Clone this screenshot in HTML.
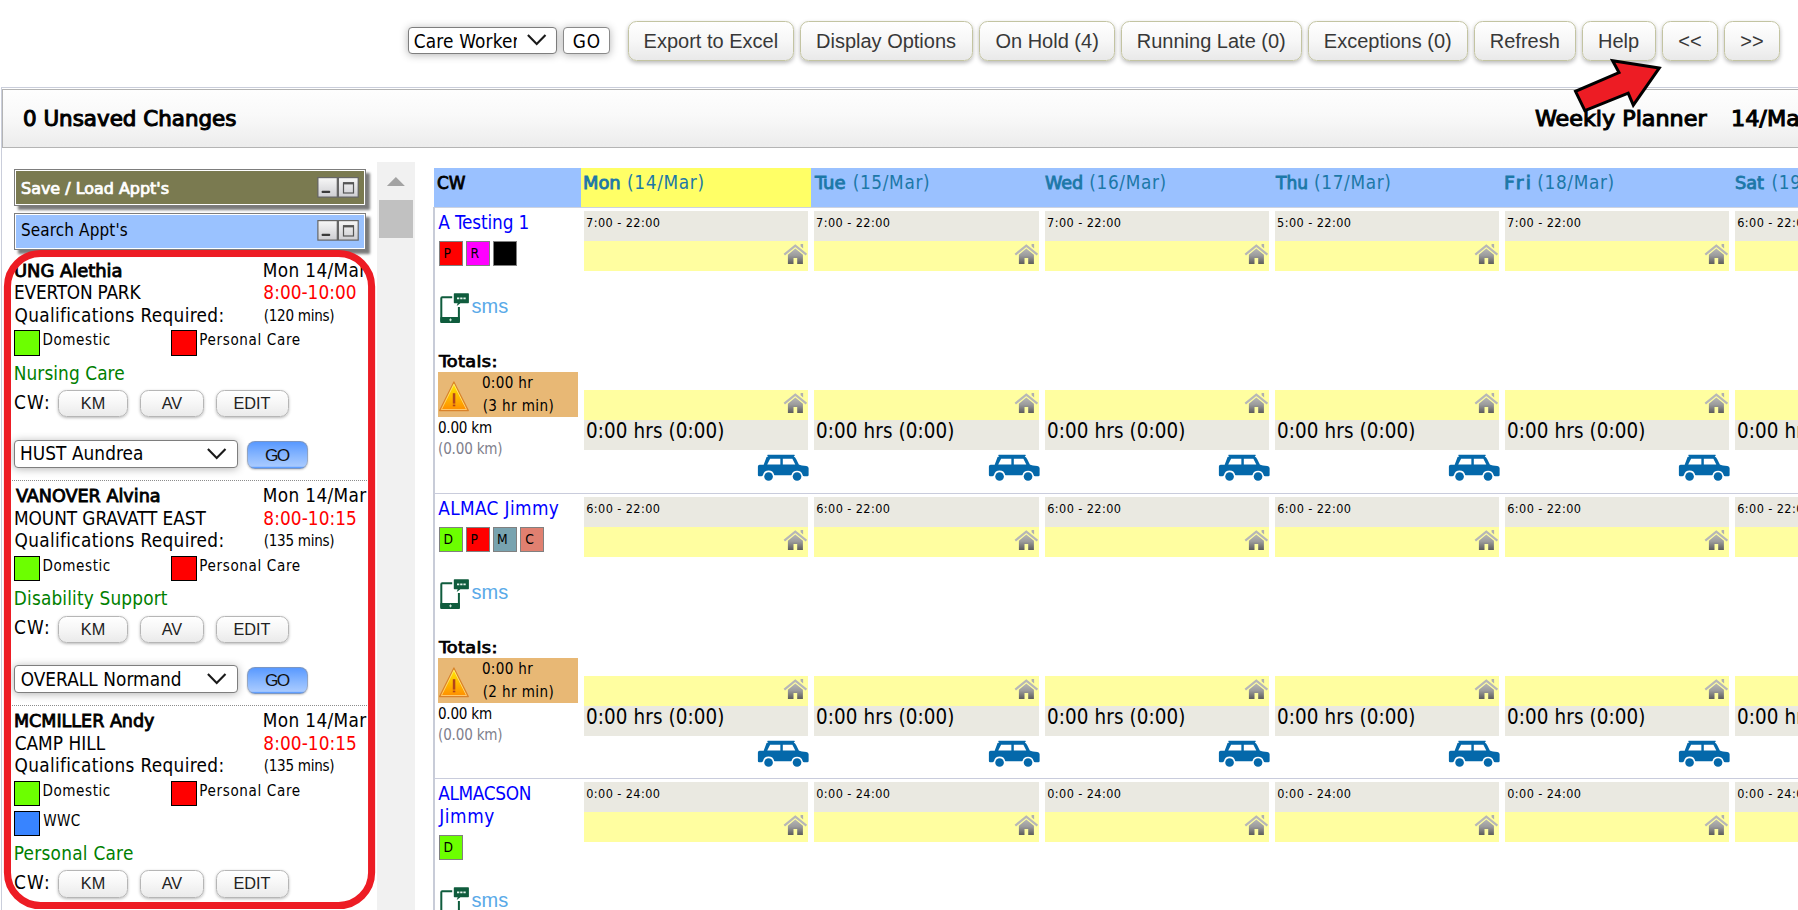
<!DOCTYPE html><html><head><meta charset="utf-8"><title>Weekly Planner</title><style>
html,body{margin:0;padding:0;background:#fff;}
body{width:1798px;height:910px;overflow:hidden;position:relative;font-family:"DejaVu Sans Condensed","Liberation Sans",sans-serif;color:#000;}
#root{position:absolute;left:0;top:0;width:1798px;height:910px;overflow:hidden;}
#root div,#root .abs{position:absolute;box-sizing:border-box;}
.t{position:absolute;white-space:nowrap;line-height:1;transform-origin:0 0;}
.a,.tb,.sb,.bgo{font-family:"Liberation Sans",Arial,sans-serif;}
.clip{overflow:hidden;}
.grp{left:0;top:0;width:0;height:0;}
.outer{border:1px solid #cacedb;border-right:0;border-bottom:0;}
.hdr{border:1px solid #b4b4b4;border-right:0;background:linear-gradient(#fefefe,#f9f9f9 45%,#ececec);}
.sel{background:#fff;border:1px solid #7e7e7e;border-radius:4px;box-shadow:0 1px 9px rgba(0,0,0,.3);}
.gobtn{background:#fff;border:1px solid #8a8a8a;border-radius:4px;box-shadow:0 1px 9px rgba(0,0,0,.3);}
.tb{border:1px solid #c3c4a2;border-radius:8.5px;background:linear-gradient(#ffffff,#f7f7f7 50%,#e9e9e9);box-shadow:0 2px 4px rgba(0,0,0,.28);display:flex;align-items:center;justify-content:center;font-size:19.95px;color:#383838;}
.tb span{position:relative;top:0.6px;white-space:nowrap;}
.sb{border:1px solid #b6b6b6;border-radius:8.5px;background:linear-gradient(#ffffff,#f6f6f6 50%,#eaeaea);box-shadow:0 1px 3px rgba(0,0,0,.28);display:flex;align-items:center;justify-content:center;font-size:16.2px;color:#222;}
.sb span{position:relative;top:0.6px;}
.bgo{border-radius:8px;border:1px solid rgba(160,150,135,.5);background:linear-gradient(#5496ff 0,#64a0ff 15%,#8ab8ff 55%,#a8caff 90%,#5a9bff 95%,#5a9bff);background-origin:border-box;box-shadow:0 1px 2px rgba(0,0,0,.2);display:flex;align-items:center;justify-content:center;font-size:16.6px;color:#111;}
.bgo span{position:relative;top:0.4px;}
.wbox{border:1px solid #7d7d7d;box-shadow:inset 0 0 0 1px #fff, 4px 4px 2.5px rgba(0,0,0,.52);}
</style></head><body><div id="root">
<svg class="abs" style="left:0;top:0" width="0" height="0" aria-hidden="true"><defs><linearGradient id="wg" x1="0" y1="0" x2="0" y2="1"><stop offset="0" stop-color="#f6f6f6"/><stop offset="1" stop-color="#cfcfd3"/></linearGradient><linearGradient id="hg" x1="0" y1="0" x2="0" y2="1"><stop offset="0" stop-color="#b6b6b6"/><stop offset="0.45" stop-color="#9c9c9c"/><stop offset="1" stop-color="#5c5c5c"/></linearGradient><linearGradient id="wr" x1="0" y1="0" x2="0" y2="1"><stop offset="0" stop-color="#ffee00"/><stop offset="1" stop-color="#ff8c00"/></linearGradient></defs></svg>
<div class="grp" id="toolbar">
<div class="sel" style="left:408.30px;top:27.30px;width:148.70px;height:26.40px;"></div>
<div class="clip" style="left:409px;top:28px;width:108.3px;height:25px">
<span class="t" style="left:4.76px;top:5.00px;font-size:18.84px;letter-spacing:0.175px;">Care Worker</span>
</div>
<svg class="abs" style="left:525.70px;top:33.30px" width="22" height="14" viewBox="0 0 22 14"><path d="M1.9 1.9 L10.7 11.0 L19.5 1.9" fill="none" stroke="#1a1a1a" stroke-width="2.1"/></svg>
<div class="gobtn" style="left:563.20px;top:27.30px;width:46.40px;height:27.20px;"></div>
<span class="t" style="left:572.76px;top:33.00px;font-size:18.84px;letter-spacing:0.914px;">GO</span>
<div class="tb" style="left:628.00px;top:21.00px;width:166.00px;height:40.00px;"></div>
<span class="t a" style="left:643.60px;top:31.00px;font-size:20.0px;color:#383838;">Export to Excel</span>
<div class="tb" style="left:800.00px;top:21.00px;width:173.00px;height:40.00px;"></div>
<span class="t a" style="left:816.00px;top:31.00px;font-size:20.0px;color:#383838;">Display Options</span>
<div class="tb" style="left:979.00px;top:21.00px;width:136.00px;height:40.00px;"></div>
<span class="t a" style="left:995.45px;top:31.00px;font-size:20.0px;color:#383838;">On Hold (4)</span>
<div class="tb" style="left:1121.00px;top:21.00px;width:181.00px;height:40.00px;"></div>
<span class="t a" style="left:1136.80px;top:31.00px;font-size:20.0px;color:#383838;">Running Late (0)</span>
<div class="tb" style="left:1308.00px;top:21.00px;width:160.00px;height:40.00px;"></div>
<span class="t a" style="left:1323.85px;top:31.00px;font-size:20.0px;color:#383838;">Exceptions (0)</span>
<div class="tb" style="left:1474.00px;top:21.00px;width:102.00px;height:40.00px;"></div>
<span class="t a" style="left:1489.80px;top:31.00px;font-size:20.0px;color:#383838;">Refresh</span>
<div class="tb" style="left:1582.00px;top:21.00px;width:74.00px;height:40.00px;"></div>
<span class="t a" style="left:1598.05px;top:31.00px;font-size:20.0px;color:#383838;">Help</span>
<div class="tb" style="left:1662.00px;top:21.00px;width:56.00px;height:40.00px;"></div>
<span class="t a" style="left:1678.30px;top:31.00px;font-size:20.0px;color:#383838;">&lt;&lt;</span>
<div class="tb" style="left:1724.00px;top:21.00px;width:56.00px;height:40.00px;"></div>
<span class="t a" style="left:1740.30px;top:31.00px;font-size:20.0px;color:#383838;">&gt;&gt;</span>
</div>
<div class="grp" id="titlebar">
<div class="outer" style="left:1.00px;top:87.00px;width:1800.00px;height:830.00px;"></div>
<div class="hdr" style="left:2.00px;top:89.00px;width:1800.00px;height:59.00px;"></div>
<span class="t" style="left:23.11px;top:108.00px;font-size:21.36px;-webkit-text-stroke:0.96px currentColor;transform:scaleX(1.1146);">0 Unsaved Changes</span>
<span class="t" style="left:1535.11px;top:108.00px;font-size:21.36px;-webkit-text-stroke:0.96px currentColor;transform:scaleX(1.1580);">Weekly Planner</span>
<span class="t" style="left:1731.10px;top:108.00px;font-size:21.36px;-webkit-text-stroke:0.96px currentColor;transform:scaleX(1.1604);">14/Mar/2016 - 20/Mar/2016</span>
</div>
<div class="grp" id="sidebar">
<div class="wbox" style="left:14.20px;top:169.00px;width:351.80px;height:37.40px;background:#7a7a50;"></div>
<span class="t" style="left:21.23px;top:181.00px;font-size:16.04px;-webkit-text-stroke:0.72px currentColor;transform:scaleX(1.1056);color:#fff;">Save / Load Appt&#x27;s</span>
<svg class="abs" style="left:317px;top:177.00px" width="42" height="21" viewBox="0 0 42 21"><rect x="0.3" y="0" width="41.5" height="20.7" fill="#666"/><rect x="1.5" y="1.2" width="18.2" height="18.3" fill="url(#wg)"/><rect x="22" y="1.2" width="18.6" height="18.3" fill="url(#wg)"/><rect x="4.6" y="13.7" width="8.6" height="2.4" rx="0.8" fill="#3a3a3a"/><rect x="26.5" y="6" width="10" height="10" fill="none" stroke="#555" stroke-width="1.2"/><rect x="26" y="5.2" width="11" height="2.2" fill="#555"/></svg>
<div class="wbox" style="left:14.20px;top:213.30px;width:351.80px;height:36.50px;background:#9ac2ff;"></div>
<span class="t" style="left:20.88px;top:222.00px;font-size:16.97px;letter-spacing:0.147px;">Search Appt&#x27;s</span>
<svg class="abs" style="left:317px;top:220.10px" width="42" height="21" viewBox="0 0 42 21"><rect x="0.3" y="0" width="41.5" height="20.7" fill="#666"/><rect x="1.5" y="1.2" width="18.2" height="18.3" fill="url(#wg)"/><rect x="22" y="1.2" width="18.6" height="18.3" fill="url(#wg)"/><rect x="4.6" y="13.7" width="8.6" height="2.4" rx="0.8" fill="#3a3a3a"/><rect x="26.5" y="6" width="10" height="10" fill="none" stroke="#555" stroke-width="1.2"/><rect x="26" y="5.2" width="11" height="2.2" fill="#555"/></svg>
<div style="left:377.00px;top:162.00px;width:38.00px;height:760.00px;background:#f1f1f1;"></div>
<div style="left:379.20px;top:200.00px;width:33.80px;height:37.80px;background:#c1c1c1;"></div>
<svg class="abs" style="left:386px;top:176px" width="20" height="11" viewBox="0 0 20 11"><path d="M0.9 10 L9.9 0.9 L18.9 10 Z" fill="#a3a3a3"/></svg>
<span class="t" style="left:14.35px;top:262.00px;font-size:17.8px;-webkit-text-stroke:0.8px currentColor;transform:scaleX(1.1184);">UNG Alethia</span>
<span class="t" style="left:262.80px;top:262.00px;font-size:18.84px;letter-spacing:0.343px;">Mon 14/Mar</span>
<span class="t" style="left:14.00px;top:284.00px;font-size:18.84px;letter-spacing:-0.187px;">EVERTON PARK</span>
<span class="t" style="left:263.37px;top:284.00px;font-size:18.84px;letter-spacing:0.021px;color:#ff0000;">8:00-10:00</span>
<span class="t" style="left:14.46px;top:307.00px;font-size:18.84px;letter-spacing:0.342px;">Qualifications Required:</span>
<span class="t" style="left:263.77px;top:309.00px;font-size:15.07px;letter-spacing:-0.292px;">(120 mins)</span>
<div style="left:14.00px;top:330.00px;width:26.00px;height:26.00px;background:#6cff00;border:1.2px solid #000;"></div>
<span class="t" style="left:42.52px;top:333.00px;font-size:15.07px;letter-spacing:0.559px;">Domestic</span>
<div style="left:170.90px;top:330.00px;width:26.00px;height:26.00px;background:#ff0000;border:1.2px solid #000;"></div>
<span class="t" style="left:199.22px;top:333.00px;font-size:15.07px;letter-spacing:0.640px;">Personal Care</span>
<span class="t" style="left:13.80px;top:365.00px;font-size:18.84px;letter-spacing:0.084px;color:#008000;">Nursing Care</span>
<span class="t" style="left:14.06px;top:394.00px;font-size:18.84px;letter-spacing:1.184px;">CW:</span>
<div class="sb" style="left:58.00px;top:390.00px;width:70.00px;height:27.00px;"></div>
<span class="t a" style="left:80.77px;top:395.00px;font-size:16.3px;color:#222;">KM</span>
<div class="sb" style="left:140.00px;top:390.00px;width:64.00px;height:27.00px;"></div>
<span class="t a" style="left:161.73px;top:395.00px;font-size:16.3px;color:#222;">AV</span>
<div class="sb" style="left:216.00px;top:390.00px;width:73.00px;height:27.00px;"></div>
<span class="t a" style="left:233.47px;top:395.00px;font-size:16.3px;color:#222;">EDIT</span>
<div class="sel" style="left:14.30px;top:440.20px;width:223.40px;height:27.50px;"></div>
<span class="t" style="left:20.00px;top:445.00px;font-size:18.84px;letter-spacing:0.061px;">HUST Aundrea</span>
<svg class="abs" style="left:206.40px;top:446.60px" width="22" height="14" viewBox="0 0 22 14"><path d="M1.9 1.9 L10.7 11.0 L19.5 1.9" fill="none" stroke="#1a1a1a" stroke-width="2.1"/></svg>
<div class="bgo" style="left:247.40px;top:441.30px;width:61.00px;height:27.50px;"></div>
<span class="t a" style="left:265.03px;top:447.00px;font-size:17.3px;letter-spacing:-1.758px;color:#111;">GO</span>
<div style="left:12.00px;top:480.10px;width:355.00px;height:0.00px;border-top:1px dotted #8c8c8c;"></div>
<span class="t" style="left:15.74px;top:487.00px;font-size:17.8px;-webkit-text-stroke:0.8px currentColor;transform:scaleX(1.0999);">VANOVER Alvina</span>
<span class="t" style="left:262.80px;top:487.00px;font-size:18.84px;letter-spacing:0.343px;">Mon 14/Mar</span>
<span class="t" style="left:14.00px;top:510.00px;font-size:18.84px;letter-spacing:-0.065px;">MOUNT GRAVATT EAST</span>
<span class="t" style="left:263.37px;top:510.00px;font-size:18.84px;letter-spacing:0.063px;color:#ff0000;">8:00-10:15</span>
<span class="t" style="left:14.46px;top:532.00px;font-size:18.84px;letter-spacing:0.342px;">Qualifications Required:</span>
<span class="t" style="left:263.77px;top:534.00px;font-size:15.07px;letter-spacing:-0.292px;">(135 mins)</span>
<div style="left:14.00px;top:556.00px;width:26.00px;height:25.00px;background:#6cff00;border:1.2px solid #000;"></div>
<span class="t" style="left:42.52px;top:559.00px;font-size:15.07px;letter-spacing:0.559px;">Domestic</span>
<div style="left:170.90px;top:556.00px;width:26.00px;height:25.00px;background:#ff0000;border:1.2px solid #000;"></div>
<span class="t" style="left:199.22px;top:559.00px;font-size:15.07px;letter-spacing:0.640px;">Personal Care</span>
<span class="t" style="left:13.80px;top:590.00px;font-size:18.84px;letter-spacing:0.169px;color:#008000;">Disability Support</span>
<span class="t" style="left:14.06px;top:619.00px;font-size:18.84px;letter-spacing:1.184px;">CW:</span>
<div class="sb" style="left:58.00px;top:616.00px;width:70.00px;height:27.00px;"></div>
<span class="t a" style="left:80.77px;top:621.00px;font-size:16.3px;color:#222;">KM</span>
<div class="sb" style="left:140.00px;top:616.00px;width:64.00px;height:27.00px;"></div>
<span class="t a" style="left:161.73px;top:621.00px;font-size:16.3px;color:#222;">AV</span>
<div class="sb" style="left:216.00px;top:616.00px;width:73.00px;height:27.00px;"></div>
<span class="t a" style="left:233.47px;top:621.00px;font-size:16.3px;color:#222;">EDIT</span>
<div class="sel" style="left:14.30px;top:665.40px;width:223.40px;height:27.50px;"></div>
<span class="t" style="left:20.66px;top:671.00px;font-size:18.84px;letter-spacing:0.058px;">OVERALL Normand</span>
<svg class="abs" style="left:206.40px;top:671.80px" width="22" height="14" viewBox="0 0 22 14"><path d="M1.9 1.9 L10.7 11.0 L19.5 1.9" fill="none" stroke="#1a1a1a" stroke-width="2.1"/></svg>
<div class="bgo" style="left:247.40px;top:666.50px;width:61.00px;height:27.50px;"></div>
<span class="t a" style="left:265.03px;top:672.00px;font-size:17.3px;letter-spacing:-1.758px;color:#111;">GO</span>
<div style="left:12.00px;top:705.00px;width:355.00px;height:0.00px;border-top:1px dotted #8c8c8c;"></div>
<span class="t" style="left:14.18px;top:712.00px;font-size:17.8px;-webkit-text-stroke:0.8px currentColor;transform:scaleX(1.0945);">MCMILLER Andy</span>
<span class="t" style="left:262.80px;top:712.00px;font-size:18.84px;letter-spacing:0.343px;">Mon 14/Mar</span>
<span class="t" style="left:14.66px;top:735.00px;font-size:18.84px;letter-spacing:0.025px;">CAMP HILL</span>
<span class="t" style="left:263.37px;top:735.00px;font-size:18.84px;letter-spacing:0.063px;color:#ff0000;">8:00-10:15</span>
<span class="t" style="left:14.46px;top:757.00px;font-size:18.84px;letter-spacing:0.342px;">Qualifications Required:</span>
<span class="t" style="left:263.77px;top:759.00px;font-size:15.07px;letter-spacing:-0.292px;">(135 mins)</span>
<div style="left:14.00px;top:781.00px;width:26.00px;height:25.00px;background:#6cff00;border:1.2px solid #000;"></div>
<span class="t" style="left:42.52px;top:784.00px;font-size:15.07px;letter-spacing:0.559px;">Domestic</span>
<div style="left:170.90px;top:781.00px;width:26.00px;height:25.00px;background:#ff0000;border:1.2px solid #000;"></div>
<span class="t" style="left:199.22px;top:784.00px;font-size:15.07px;letter-spacing:0.640px;">Personal Care</span>
<div style="left:14.00px;top:811.00px;width:26.00px;height:25.00px;background:#3884ff;border:1.2px solid #000;"></div>
<span class="t" style="left:43.35px;top:814.00px;font-size:15.07px;letter-spacing:0.343px;">WWC</span>
<span class="t" style="left:13.80px;top:845.00px;font-size:18.84px;letter-spacing:0.252px;color:#008000;">Personal Care</span>
<span class="t" style="left:14.06px;top:874.00px;font-size:18.84px;letter-spacing:1.184px;">CW:</span>
<div class="sb" style="left:58.00px;top:870.00px;width:70.00px;height:28.00px;"></div>
<span class="t a" style="left:80.77px;top:875.00px;font-size:16.3px;color:#222;">KM</span>
<div class="sb" style="left:140.00px;top:870.00px;width:64.00px;height:28.00px;"></div>
<span class="t a" style="left:161.73px;top:875.00px;font-size:16.3px;color:#222;">AV</span>
<div class="sb" style="left:216.00px;top:870.00px;width:73.00px;height:28.00px;"></div>
<span class="t a" style="left:233.47px;top:875.00px;font-size:16.3px;color:#222;">EDIT</span>
</div>
<div class="grp" id="planner">
<div style="left:434.10px;top:168.00px;width:1400.00px;height:39.20px;background:#9ac1ff;"></div>
<div style="left:580.90px;top:168.00px;width:230.20px;height:39.20px;background:#ffff66;"></div>
<span class="t" style="left:436.98px;top:174.00px;font-size:17.8px;-webkit-text-stroke:0.8px currentColor;transform:scaleX(1.0555);">CW</span>
<span class="t" style="left:583.26px;top:174.00px;font-size:17.8px;-webkit-text-stroke:0.8px currentColor;transform:scaleX(1.1173);color:#1c78a8;">Mon</span>
<span class="t" style="left:627.09px;top:174.00px;font-size:18.84px;letter-spacing:0.655px;color:#1c78a8;">(14/Mar)</span>
<span class="t" style="left:815.30px;top:174.00px;font-size:17.8px;-webkit-text-stroke:0.8px currentColor;transform:scaleX(1.1273);color:#1c78a8;">Tue</span>
<span class="t" style="left:852.64px;top:174.00px;font-size:18.84px;letter-spacing:0.655px;color:#1c78a8;">(15/Mar)</span>
<span class="t" style="left:1044.85px;top:174.00px;font-size:17.8px;-webkit-text-stroke:0.8px currentColor;transform:scaleX(1.0998);color:#1c78a8;">Wed</span>
<span class="t" style="left:1089.19px;top:174.00px;font-size:18.84px;letter-spacing:0.655px;color:#1c78a8;">(16/Mar)</span>
<span class="t" style="left:1275.77px;top:174.00px;font-size:17.8px;-webkit-text-stroke:0.8px currentColor;transform:scaleX(1.0661);color:#1c78a8;">Thu</span>
<span class="t" style="left:1313.94px;top:174.00px;font-size:18.84px;letter-spacing:0.655px;color:#1c78a8;">(17/Mar)</span>
<span class="t" style="left:1504.19px;top:174.00px;font-size:17.8px;letter-spacing:2.016px;-webkit-text-stroke:0.8px currentColor;transform:scaleX(1.1800);color:#1c78a8;">Fri</span>
<span class="t" style="left:1537.19px;top:174.00px;font-size:18.84px;letter-spacing:0.655px;color:#1c78a8;">(18/Mar)</span>
<span class="t" style="left:1735.01px;top:174.00px;font-size:17.8px;-webkit-text-stroke:0.8px currentColor;transform:scaleX(1.1081);color:#1c78a8;">Sat</span>
<span class="t" style="left:1771.44px;top:174.00px;font-size:18.84px;letter-spacing:0.655px;color:#1c78a8;">(19/Mar)</span>
<div style="left:434.00px;top:207.00px;width:1400.00px;height:1.00px;background:#cdd3e0;"></div>
<div style="left:433.10px;top:207.00px;width:1.70px;height:720.00px;background:#c8ccd8;"></div>
<div style="left:434.00px;top:493.00px;width:1400.00px;height:1.30px;background:#c9ccdc;"></div>
<div style="left:434.00px;top:777.80px;width:1400.00px;height:1.30px;background:#c9ccdc;"></div>
<span class="t" style="left:438.21px;top:214.00px;font-size:18.84px;letter-spacing:-0.121px;color:#0000ff;">A Testing 1</span>
<div style="left:439.00px;top:241.10px;width:24.00px;height:24.80px;background:#ff0000;border:1px solid #808080;"></div>
<span class="t" style="left:443.43px;top:247.00px;font-size:13.73px;">P</span>
<div style="left:466.15px;top:241.10px;width:24.00px;height:24.80px;background:#ff00ff;border:1px solid #808080;"></div>
<span class="t" style="left:470.58px;top:247.00px;font-size:13.73px;">R</span>
<div style="left:493.30px;top:241.10px;width:24.00px;height:24.80px;background:#000000;border:1px solid #808080;"></div>
<svg class="abs" style="left:439.00px;top:292.90px" width="32" height="32" viewBox="0 0 32 32"><path d="M13.2 4.2 H3.2 Q2.3 4.2 2.3 5.2 V28 Q2.3 29 3.3 29 H18.9 Q19.9 29 19.9 28 V14.0" fill="none" stroke="#0f5c3d" stroke-width="2"/><rect x="1.3" y="24.1" width="19.6" height="5.9" rx="0.9" fill="#0f5c3d"/><path d="M10.1 26.9 h2.8 M11.5 25.5 v2.8" stroke="#d8efe4" stroke-width="0.9"/><path d="M15.5 0.3 H29.2 Q29.9 0.3 29.9 1 V9.5 Q29.9 10.2 29.2 10.2 H21.4 L17.7 13.0 L18.7 10.2 H15.5 Q14.8 10.2 14.8 9.5 V1 Q14.8 0.3 15.5 0.3 Z" fill="#0f5c3d"/><path d="M18.0 5.4 h2.3 M21.2 5.4 h2.3 M24.4 5.4 h2.3" stroke="#e6f5ee" stroke-width="1.6"/></svg>
<span class="t a" style="left:471.40px;top:296.00px;font-size:20.0px;letter-spacing:0.050px;color:#5aaae8;">sms</span>
<div style="left:584.00px;top:211.00px;width:224.00px;height:30.00px;background:#eae9e1;"></div>
<div style="left:584.00px;top:241.00px;width:224.00px;height:30.00px;background:#fffea0;"></div>
<span class="t" style="left:586.12px;top:217.00px;font-size:12.56px;letter-spacing:0.430px;">7:00 - 22:00</span>
<svg class="abs" style="left:783.40px;top:242.80px" width="25" height="22" viewBox="0 0 25 22"><path d="M17.6 0.9 h2.5 v4.6 l-2.5 -2.2 z" fill="#b0b0b0"/><path d="M12.3 5.6 L19.9 11.8 V21 H14.2 V15.0 H10.5 V21 H4.9 V11.8 Z" fill="url(#hg)"/><path d="M1.3 11.6 L12.3 2.6 L23.4 11.6" fill="none" stroke="#b7b7b7" stroke-width="2.2" stroke-linejoin="miter"/></svg>
<div style="left:814.00px;top:211.00px;width:225.00px;height:30.00px;background:#eae9e1;"></div>
<div style="left:814.00px;top:241.00px;width:225.00px;height:30.00px;background:#fffea0;"></div>
<span class="t" style="left:816.12px;top:217.00px;font-size:12.56px;letter-spacing:0.430px;">7:00 - 22:00</span>
<svg class="abs" style="left:1014.40px;top:242.80px" width="25" height="22" viewBox="0 0 25 22"><path d="M17.6 0.9 h2.5 v4.6 l-2.5 -2.2 z" fill="#b0b0b0"/><path d="M12.3 5.6 L19.9 11.8 V21 H14.2 V15.0 H10.5 V21 H4.9 V11.8 Z" fill="url(#hg)"/><path d="M1.3 11.6 L12.3 2.6 L23.4 11.6" fill="none" stroke="#b7b7b7" stroke-width="2.2" stroke-linejoin="miter"/></svg>
<div style="left:1045.00px;top:211.00px;width:224.00px;height:30.00px;background:#eae9e1;"></div>
<div style="left:1045.00px;top:241.00px;width:224.00px;height:30.00px;background:#fffea0;"></div>
<span class="t" style="left:1047.12px;top:217.00px;font-size:12.56px;letter-spacing:0.430px;">7:00 - 22:00</span>
<svg class="abs" style="left:1244.40px;top:242.80px" width="25" height="22" viewBox="0 0 25 22"><path d="M17.6 0.9 h2.5 v4.6 l-2.5 -2.2 z" fill="#b0b0b0"/><path d="M12.3 5.6 L19.9 11.8 V21 H14.2 V15.0 H10.5 V21 H4.9 V11.8 Z" fill="url(#hg)"/><path d="M1.3 11.6 L12.3 2.6 L23.4 11.6" fill="none" stroke="#b7b7b7" stroke-width="2.2" stroke-linejoin="miter"/></svg>
<div style="left:1275.00px;top:211.00px;width:224.00px;height:30.00px;background:#eae9e1;"></div>
<div style="left:1275.00px;top:241.00px;width:224.00px;height:30.00px;background:#fffea0;"></div>
<span class="t" style="left:1277.12px;top:217.00px;font-size:12.56px;letter-spacing:0.430px;">5:00 - 22:00</span>
<svg class="abs" style="left:1474.40px;top:242.80px" width="25" height="22" viewBox="0 0 25 22"><path d="M17.6 0.9 h2.5 v4.6 l-2.5 -2.2 z" fill="#b0b0b0"/><path d="M12.3 5.6 L19.9 11.8 V21 H14.2 V15.0 H10.5 V21 H4.9 V11.8 Z" fill="url(#hg)"/><path d="M1.3 11.6 L12.3 2.6 L23.4 11.6" fill="none" stroke="#b7b7b7" stroke-width="2.2" stroke-linejoin="miter"/></svg>
<div style="left:1505.00px;top:211.00px;width:224.00px;height:30.00px;background:#eae9e1;"></div>
<div style="left:1505.00px;top:241.00px;width:224.00px;height:30.00px;background:#fffea0;"></div>
<span class="t" style="left:1507.12px;top:217.00px;font-size:12.56px;letter-spacing:0.430px;">7:00 - 22:00</span>
<svg class="abs" style="left:1704.40px;top:242.80px" width="25" height="22" viewBox="0 0 25 22"><path d="M17.6 0.9 h2.5 v4.6 l-2.5 -2.2 z" fill="#b0b0b0"/><path d="M12.3 5.6 L19.9 11.8 V21 H14.2 V15.0 H10.5 V21 H4.9 V11.8 Z" fill="url(#hg)"/><path d="M1.3 11.6 L12.3 2.6 L23.4 11.6" fill="none" stroke="#b7b7b7" stroke-width="2.2" stroke-linejoin="miter"/></svg>
<div style="left:1735.00px;top:211.00px;width:224.00px;height:30.00px;background:#eae9e1;"></div>
<div style="left:1735.00px;top:241.00px;width:224.00px;height:30.00px;background:#fffea0;"></div>
<span class="t" style="left:1737.25px;top:217.00px;font-size:12.56px;letter-spacing:0.418px;">6:00 - 22:00</span>
<svg class="abs" style="left:1934.40px;top:242.80px" width="25" height="22" viewBox="0 0 25 22"><path d="M17.6 0.9 h2.5 v4.6 l-2.5 -2.2 z" fill="#b0b0b0"/><path d="M12.3 5.6 L19.9 11.8 V21 H14.2 V15.0 H10.5 V21 H4.9 V11.8 Z" fill="url(#hg)"/><path d="M1.3 11.6 L12.3 2.6 L23.4 11.6" fill="none" stroke="#b7b7b7" stroke-width="2.2" stroke-linejoin="miter"/></svg>
<span class="t" style="left:439.24px;top:354.00px;font-size:16.69px;letter-spacing:0.305px;-webkit-text-stroke:0.75px currentColor;transform:scaleX(1.1800);">Totals:</span>
<div style="left:438.00px;top:372.00px;width:140.00px;height:44.90px;background:#e8b875;"></div>
<svg class="abs" style="left:438.20px;top:379.60px" width="32" height="32" viewBox="0 0 32 32"><path d="M15.9 1.9 L30.3 30.6 H1.6 Z" fill="url(#wr)" stroke="#d9822b" stroke-width="1.2" stroke-linejoin="round"/><path d="M15.9 4.3 L28.5 29.5 H3.4 Z" fill="none" stroke="#ffe9a8" stroke-width="0.8" stroke-linejoin="round" opacity="0.8"/><rect x="14.8" y="13.2" width="2.5" height="10.4" fill="#b3441a"/><rect x="14.8" y="24.6" width="2.5" height="1.7" fill="#b3441a"/></svg>
<span class="t" style="left:481.90px;top:376.00px;font-size:15.07px;letter-spacing:0.334px;">0:00 hr</span>
<span class="t" style="left:482.67px;top:399.00px;font-size:15.07px;letter-spacing:0.394px;">(3 hr min)</span>
<span class="t" style="left:437.90px;top:421.00px;font-size:15.07px;letter-spacing:-0.216px;">0.00 km</span>
<span class="t" style="left:438.07px;top:442.00px;font-size:15.07px;letter-spacing:-0.190px;color:#80808c;">(0.00 km)</span>
<div style="left:584.00px;top:390.00px;width:224.00px;height:30.00px;background:#fffea0;"></div>
<div style="left:584.00px;top:420.00px;width:224.00px;height:30.00px;background:#eae9e1;"></div>
<svg class="abs" style="left:783.40px;top:391.80px" width="25" height="22" viewBox="0 0 25 22"><path d="M17.6 0.9 h2.5 v4.6 l-2.5 -2.2 z" fill="#b0b0b0"/><path d="M12.3 5.6 L19.9 11.8 V21 H14.2 V15.0 H10.5 V21 H4.9 V11.8 Z" fill="url(#hg)"/><path d="M1.3 11.6 L12.3 2.6 L23.4 11.6" fill="none" stroke="#b7b7b7" stroke-width="2.2" stroke-linejoin="miter"/></svg>
<span class="t" style="left:585.98px;top:421.00px;font-size:20.4px;letter-spacing:0.105px;">0:00 hrs (0:00)</span>
<svg class="abs" style="left:756.50px;top:453.70px" width="52" height="28" viewBox="140 190 1168.7 629.3"><path fill="#0468aa" fill-rule="evenodd" d="M385 205 H975 Q1000 207 985 232 L965 245 Q1000 262 1022 310 L1080 425 Q1100 440 1150 446 L1250 462 Q1300 470 1300 510 V660 Q1300 690 1270 690 H1200 Q1172 690 1165 660 A130 130 0 0 0 915 660 Q905 668 890 668 H550 Q535 668 527 660 A130 130 0 0 0 275 660 Q262 690 235 690 H190 Q160 690 160 660 V470 Q160 430 200 430 H290 L355 260 Q362 245 395 245 L375 232 Q360 207 385 205 Z M435 295 H665 V425 H370 Z M720 295 H935 L1000 425 H720 Z"/><circle cx="400" cy="695" r="97" fill="#0468aa"/><circle cx="1040" cy="695" r="97" fill="#0468aa"/></svg>
<div style="left:814.00px;top:390.00px;width:225.00px;height:30.00px;background:#fffea0;"></div>
<div style="left:814.00px;top:420.00px;width:225.00px;height:30.00px;background:#eae9e1;"></div>
<svg class="abs" style="left:1014.40px;top:391.80px" width="25" height="22" viewBox="0 0 25 22"><path d="M17.6 0.9 h2.5 v4.6 l-2.5 -2.2 z" fill="#b0b0b0"/><path d="M12.3 5.6 L19.9 11.8 V21 H14.2 V15.0 H10.5 V21 H4.9 V11.8 Z" fill="url(#hg)"/><path d="M1.3 11.6 L12.3 2.6 L23.4 11.6" fill="none" stroke="#b7b7b7" stroke-width="2.2" stroke-linejoin="miter"/></svg>
<span class="t" style="left:815.98px;top:421.00px;font-size:20.4px;letter-spacing:0.105px;">0:00 hrs (0:00)</span>
<svg class="abs" style="left:987.50px;top:453.70px" width="52" height="28" viewBox="140 190 1168.7 629.3"><path fill="#0468aa" fill-rule="evenodd" d="M385 205 H975 Q1000 207 985 232 L965 245 Q1000 262 1022 310 L1080 425 Q1100 440 1150 446 L1250 462 Q1300 470 1300 510 V660 Q1300 690 1270 690 H1200 Q1172 690 1165 660 A130 130 0 0 0 915 660 Q905 668 890 668 H550 Q535 668 527 660 A130 130 0 0 0 275 660 Q262 690 235 690 H190 Q160 690 160 660 V470 Q160 430 200 430 H290 L355 260 Q362 245 395 245 L375 232 Q360 207 385 205 Z M435 295 H665 V425 H370 Z M720 295 H935 L1000 425 H720 Z"/><circle cx="400" cy="695" r="97" fill="#0468aa"/><circle cx="1040" cy="695" r="97" fill="#0468aa"/></svg>
<div style="left:1045.00px;top:390.00px;width:224.00px;height:30.00px;background:#fffea0;"></div>
<div style="left:1045.00px;top:420.00px;width:224.00px;height:30.00px;background:#eae9e1;"></div>
<svg class="abs" style="left:1244.40px;top:391.80px" width="25" height="22" viewBox="0 0 25 22"><path d="M17.6 0.9 h2.5 v4.6 l-2.5 -2.2 z" fill="#b0b0b0"/><path d="M12.3 5.6 L19.9 11.8 V21 H14.2 V15.0 H10.5 V21 H4.9 V11.8 Z" fill="url(#hg)"/><path d="M1.3 11.6 L12.3 2.6 L23.4 11.6" fill="none" stroke="#b7b7b7" stroke-width="2.2" stroke-linejoin="miter"/></svg>
<span class="t" style="left:1046.98px;top:421.00px;font-size:20.4px;letter-spacing:0.105px;">0:00 hrs (0:00)</span>
<svg class="abs" style="left:1217.50px;top:453.70px" width="52" height="28" viewBox="140 190 1168.7 629.3"><path fill="#0468aa" fill-rule="evenodd" d="M385 205 H975 Q1000 207 985 232 L965 245 Q1000 262 1022 310 L1080 425 Q1100 440 1150 446 L1250 462 Q1300 470 1300 510 V660 Q1300 690 1270 690 H1200 Q1172 690 1165 660 A130 130 0 0 0 915 660 Q905 668 890 668 H550 Q535 668 527 660 A130 130 0 0 0 275 660 Q262 690 235 690 H190 Q160 690 160 660 V470 Q160 430 200 430 H290 L355 260 Q362 245 395 245 L375 232 Q360 207 385 205 Z M435 295 H665 V425 H370 Z M720 295 H935 L1000 425 H720 Z"/><circle cx="400" cy="695" r="97" fill="#0468aa"/><circle cx="1040" cy="695" r="97" fill="#0468aa"/></svg>
<div style="left:1275.00px;top:390.00px;width:224.00px;height:30.00px;background:#fffea0;"></div>
<div style="left:1275.00px;top:420.00px;width:224.00px;height:30.00px;background:#eae9e1;"></div>
<svg class="abs" style="left:1474.40px;top:391.80px" width="25" height="22" viewBox="0 0 25 22"><path d="M17.6 0.9 h2.5 v4.6 l-2.5 -2.2 z" fill="#b0b0b0"/><path d="M12.3 5.6 L19.9 11.8 V21 H14.2 V15.0 H10.5 V21 H4.9 V11.8 Z" fill="url(#hg)"/><path d="M1.3 11.6 L12.3 2.6 L23.4 11.6" fill="none" stroke="#b7b7b7" stroke-width="2.2" stroke-linejoin="miter"/></svg>
<span class="t" style="left:1276.98px;top:421.00px;font-size:20.4px;letter-spacing:0.105px;">0:00 hrs (0:00)</span>
<svg class="abs" style="left:1447.50px;top:453.70px" width="52" height="28" viewBox="140 190 1168.7 629.3"><path fill="#0468aa" fill-rule="evenodd" d="M385 205 H975 Q1000 207 985 232 L965 245 Q1000 262 1022 310 L1080 425 Q1100 440 1150 446 L1250 462 Q1300 470 1300 510 V660 Q1300 690 1270 690 H1200 Q1172 690 1165 660 A130 130 0 0 0 915 660 Q905 668 890 668 H550 Q535 668 527 660 A130 130 0 0 0 275 660 Q262 690 235 690 H190 Q160 690 160 660 V470 Q160 430 200 430 H290 L355 260 Q362 245 395 245 L375 232 Q360 207 385 205 Z M435 295 H665 V425 H370 Z M720 295 H935 L1000 425 H720 Z"/><circle cx="400" cy="695" r="97" fill="#0468aa"/><circle cx="1040" cy="695" r="97" fill="#0468aa"/></svg>
<div style="left:1505.00px;top:390.00px;width:224.00px;height:30.00px;background:#fffea0;"></div>
<div style="left:1505.00px;top:420.00px;width:224.00px;height:30.00px;background:#eae9e1;"></div>
<svg class="abs" style="left:1704.40px;top:391.80px" width="25" height="22" viewBox="0 0 25 22"><path d="M17.6 0.9 h2.5 v4.6 l-2.5 -2.2 z" fill="#b0b0b0"/><path d="M12.3 5.6 L19.9 11.8 V21 H14.2 V15.0 H10.5 V21 H4.9 V11.8 Z" fill="url(#hg)"/><path d="M1.3 11.6 L12.3 2.6 L23.4 11.6" fill="none" stroke="#b7b7b7" stroke-width="2.2" stroke-linejoin="miter"/></svg>
<span class="t" style="left:1506.98px;top:421.00px;font-size:20.4px;letter-spacing:0.105px;">0:00 hrs (0:00)</span>
<svg class="abs" style="left:1677.50px;top:453.70px" width="52" height="28" viewBox="140 190 1168.7 629.3"><path fill="#0468aa" fill-rule="evenodd" d="M385 205 H975 Q1000 207 985 232 L965 245 Q1000 262 1022 310 L1080 425 Q1100 440 1150 446 L1250 462 Q1300 470 1300 510 V660 Q1300 690 1270 690 H1200 Q1172 690 1165 660 A130 130 0 0 0 915 660 Q905 668 890 668 H550 Q535 668 527 660 A130 130 0 0 0 275 660 Q262 690 235 690 H190 Q160 690 160 660 V470 Q160 430 200 430 H290 L355 260 Q362 245 395 245 L375 232 Q360 207 385 205 Z M435 295 H665 V425 H370 Z M720 295 H935 L1000 425 H720 Z"/><circle cx="400" cy="695" r="97" fill="#0468aa"/><circle cx="1040" cy="695" r="97" fill="#0468aa"/></svg>
<div style="left:1735.00px;top:390.00px;width:224.00px;height:30.00px;background:#fffea0;"></div>
<div style="left:1735.00px;top:420.00px;width:224.00px;height:30.00px;background:#eae9e1;"></div>
<svg class="abs" style="left:1934.40px;top:391.80px" width="25" height="22" viewBox="0 0 25 22"><path d="M17.6 0.9 h2.5 v4.6 l-2.5 -2.2 z" fill="#b0b0b0"/><path d="M12.3 5.6 L19.9 11.8 V21 H14.2 V15.0 H10.5 V21 H4.9 V11.8 Z" fill="url(#hg)"/><path d="M1.3 11.6 L12.3 2.6 L23.4 11.6" fill="none" stroke="#b7b7b7" stroke-width="2.2" stroke-linejoin="miter"/></svg>
<span class="t" style="left:1736.98px;top:421.00px;font-size:20.4px;letter-spacing:0.105px;">0:00 hrs (0:00)</span>
<svg class="abs" style="left:1907.50px;top:453.70px" width="52" height="28" viewBox="140 190 1168.7 629.3"><path fill="#0468aa" fill-rule="evenodd" d="M385 205 H975 Q1000 207 985 232 L965 245 Q1000 262 1022 310 L1080 425 Q1100 440 1150 446 L1250 462 Q1300 470 1300 510 V660 Q1300 690 1270 690 H1200 Q1172 690 1165 660 A130 130 0 0 0 915 660 Q905 668 890 668 H550 Q535 668 527 660 A130 130 0 0 0 275 660 Q262 690 235 690 H190 Q160 690 160 660 V470 Q160 430 200 430 H290 L355 260 Q362 245 395 245 L375 232 Q360 207 385 205 Z M435 295 H665 V425 H370 Z M720 295 H935 L1000 425 H720 Z"/><circle cx="400" cy="695" r="97" fill="#0468aa"/><circle cx="1040" cy="695" r="97" fill="#0468aa"/></svg>
<span class="t" style="left:438.21px;top:500.00px;font-size:18.84px;letter-spacing:0.376px;color:#0000ff;">ALMAC Jimmy</span>
<div style="left:439.00px;top:527.10px;width:24.00px;height:24.80px;background:#6cff00;border:1px solid #808080;"></div>
<span class="t" style="left:443.43px;top:533.00px;font-size:13.73px;">D</span>
<div style="left:466.15px;top:527.10px;width:24.00px;height:24.80px;background:#ff0000;border:1px solid #808080;"></div>
<span class="t" style="left:470.58px;top:533.00px;font-size:13.73px;">P</span>
<div style="left:493.30px;top:527.10px;width:24.00px;height:24.80px;background:#78a3b0;border:1px solid #808080;"></div>
<span class="t" style="left:496.93px;top:533.00px;font-size:13.73px;">M</span>
<div style="left:520.45px;top:527.10px;width:24.00px;height:24.80px;background:#e08070;border:1px solid #808080;"></div>
<span class="t" style="left:525.36px;top:533.00px;font-size:13.73px;">C</span>
<svg class="abs" style="left:439.00px;top:578.90px" width="32" height="32" viewBox="0 0 32 32"><path d="M13.2 4.2 H3.2 Q2.3 4.2 2.3 5.2 V28 Q2.3 29 3.3 29 H18.9 Q19.9 29 19.9 28 V14.0" fill="none" stroke="#0f5c3d" stroke-width="2"/><rect x="1.3" y="24.1" width="19.6" height="5.9" rx="0.9" fill="#0f5c3d"/><path d="M10.1 26.9 h2.8 M11.5 25.5 v2.8" stroke="#d8efe4" stroke-width="0.9"/><path d="M15.5 0.3 H29.2 Q29.9 0.3 29.9 1 V9.5 Q29.9 10.2 29.2 10.2 H21.4 L17.7 13.0 L18.7 10.2 H15.5 Q14.8 10.2 14.8 9.5 V1 Q14.8 0.3 15.5 0.3 Z" fill="#0f5c3d"/><path d="M18.0 5.4 h2.3 M21.2 5.4 h2.3 M24.4 5.4 h2.3" stroke="#e6f5ee" stroke-width="1.6"/></svg>
<span class="t a" style="left:471.40px;top:582.00px;font-size:20.0px;letter-spacing:0.050px;color:#5aaae8;">sms</span>
<div style="left:584.00px;top:497.00px;width:224.00px;height:30.00px;background:#eae9e1;"></div>
<div style="left:584.00px;top:527.00px;width:224.00px;height:30.00px;background:#fffea0;"></div>
<span class="t" style="left:586.25px;top:503.00px;font-size:12.56px;letter-spacing:0.418px;">6:00 - 22:00</span>
<svg class="abs" style="left:783.40px;top:528.80px" width="25" height="22" viewBox="0 0 25 22"><path d="M17.6 0.9 h2.5 v4.6 l-2.5 -2.2 z" fill="#b0b0b0"/><path d="M12.3 5.6 L19.9 11.8 V21 H14.2 V15.0 H10.5 V21 H4.9 V11.8 Z" fill="url(#hg)"/><path d="M1.3 11.6 L12.3 2.6 L23.4 11.6" fill="none" stroke="#b7b7b7" stroke-width="2.2" stroke-linejoin="miter"/></svg>
<div style="left:814.00px;top:497.00px;width:225.00px;height:30.00px;background:#eae9e1;"></div>
<div style="left:814.00px;top:527.00px;width:225.00px;height:30.00px;background:#fffea0;"></div>
<span class="t" style="left:816.25px;top:503.00px;font-size:12.56px;letter-spacing:0.418px;">6:00 - 22:00</span>
<svg class="abs" style="left:1014.40px;top:528.80px" width="25" height="22" viewBox="0 0 25 22"><path d="M17.6 0.9 h2.5 v4.6 l-2.5 -2.2 z" fill="#b0b0b0"/><path d="M12.3 5.6 L19.9 11.8 V21 H14.2 V15.0 H10.5 V21 H4.9 V11.8 Z" fill="url(#hg)"/><path d="M1.3 11.6 L12.3 2.6 L23.4 11.6" fill="none" stroke="#b7b7b7" stroke-width="2.2" stroke-linejoin="miter"/></svg>
<div style="left:1045.00px;top:497.00px;width:224.00px;height:30.00px;background:#eae9e1;"></div>
<div style="left:1045.00px;top:527.00px;width:224.00px;height:30.00px;background:#fffea0;"></div>
<span class="t" style="left:1047.25px;top:503.00px;font-size:12.56px;letter-spacing:0.418px;">6:00 - 22:00</span>
<svg class="abs" style="left:1244.40px;top:528.80px" width="25" height="22" viewBox="0 0 25 22"><path d="M17.6 0.9 h2.5 v4.6 l-2.5 -2.2 z" fill="#b0b0b0"/><path d="M12.3 5.6 L19.9 11.8 V21 H14.2 V15.0 H10.5 V21 H4.9 V11.8 Z" fill="url(#hg)"/><path d="M1.3 11.6 L12.3 2.6 L23.4 11.6" fill="none" stroke="#b7b7b7" stroke-width="2.2" stroke-linejoin="miter"/></svg>
<div style="left:1275.00px;top:497.00px;width:224.00px;height:30.00px;background:#eae9e1;"></div>
<div style="left:1275.00px;top:527.00px;width:224.00px;height:30.00px;background:#fffea0;"></div>
<span class="t" style="left:1277.25px;top:503.00px;font-size:12.56px;letter-spacing:0.418px;">6:00 - 22:00</span>
<svg class="abs" style="left:1474.40px;top:528.80px" width="25" height="22" viewBox="0 0 25 22"><path d="M17.6 0.9 h2.5 v4.6 l-2.5 -2.2 z" fill="#b0b0b0"/><path d="M12.3 5.6 L19.9 11.8 V21 H14.2 V15.0 H10.5 V21 H4.9 V11.8 Z" fill="url(#hg)"/><path d="M1.3 11.6 L12.3 2.6 L23.4 11.6" fill="none" stroke="#b7b7b7" stroke-width="2.2" stroke-linejoin="miter"/></svg>
<div style="left:1505.00px;top:497.00px;width:224.00px;height:30.00px;background:#eae9e1;"></div>
<div style="left:1505.00px;top:527.00px;width:224.00px;height:30.00px;background:#fffea0;"></div>
<span class="t" style="left:1507.25px;top:503.00px;font-size:12.56px;letter-spacing:0.418px;">6:00 - 22:00</span>
<svg class="abs" style="left:1704.40px;top:528.80px" width="25" height="22" viewBox="0 0 25 22"><path d="M17.6 0.9 h2.5 v4.6 l-2.5 -2.2 z" fill="#b0b0b0"/><path d="M12.3 5.6 L19.9 11.8 V21 H14.2 V15.0 H10.5 V21 H4.9 V11.8 Z" fill="url(#hg)"/><path d="M1.3 11.6 L12.3 2.6 L23.4 11.6" fill="none" stroke="#b7b7b7" stroke-width="2.2" stroke-linejoin="miter"/></svg>
<div style="left:1735.00px;top:497.00px;width:224.00px;height:30.00px;background:#eae9e1;"></div>
<div style="left:1735.00px;top:527.00px;width:224.00px;height:30.00px;background:#fffea0;"></div>
<span class="t" style="left:1737.25px;top:503.00px;font-size:12.56px;letter-spacing:0.418px;">6:00 - 22:00</span>
<svg class="abs" style="left:1934.40px;top:528.80px" width="25" height="22" viewBox="0 0 25 22"><path d="M17.6 0.9 h2.5 v4.6 l-2.5 -2.2 z" fill="#b0b0b0"/><path d="M12.3 5.6 L19.9 11.8 V21 H14.2 V15.0 H10.5 V21 H4.9 V11.8 Z" fill="url(#hg)"/><path d="M1.3 11.6 L12.3 2.6 L23.4 11.6" fill="none" stroke="#b7b7b7" stroke-width="2.2" stroke-linejoin="miter"/></svg>
<span class="t" style="left:439.24px;top:640.00px;font-size:16.69px;letter-spacing:0.305px;-webkit-text-stroke:0.75px currentColor;transform:scaleX(1.1800);">Totals:</span>
<div style="left:438.00px;top:658.00px;width:140.00px;height:44.90px;background:#e8b875;"></div>
<svg class="abs" style="left:438.20px;top:665.60px" width="32" height="32" viewBox="0 0 32 32"><path d="M15.9 1.9 L30.3 30.6 H1.6 Z" fill="url(#wr)" stroke="#d9822b" stroke-width="1.2" stroke-linejoin="round"/><path d="M15.9 4.3 L28.5 29.5 H3.4 Z" fill="none" stroke="#ffe9a8" stroke-width="0.8" stroke-linejoin="round" opacity="0.8"/><rect x="14.8" y="13.2" width="2.5" height="10.4" fill="#b3441a"/><rect x="14.8" y="24.6" width="2.5" height="1.7" fill="#b3441a"/></svg>
<span class="t" style="left:481.90px;top:662.00px;font-size:15.07px;letter-spacing:0.334px;">0:00 hr</span>
<span class="t" style="left:482.67px;top:685.00px;font-size:15.07px;letter-spacing:0.394px;">(2 hr min)</span>
<span class="t" style="left:437.90px;top:707.00px;font-size:15.07px;letter-spacing:-0.216px;">0.00 km</span>
<span class="t" style="left:438.07px;top:728.00px;font-size:15.07px;letter-spacing:-0.190px;color:#80808c;">(0.00 km)</span>
<div style="left:584.00px;top:676.00px;width:224.00px;height:30.00px;background:#fffea0;"></div>
<div style="left:584.00px;top:706.00px;width:224.00px;height:30.00px;background:#eae9e1;"></div>
<svg class="abs" style="left:783.40px;top:677.80px" width="25" height="22" viewBox="0 0 25 22"><path d="M17.6 0.9 h2.5 v4.6 l-2.5 -2.2 z" fill="#b0b0b0"/><path d="M12.3 5.6 L19.9 11.8 V21 H14.2 V15.0 H10.5 V21 H4.9 V11.8 Z" fill="url(#hg)"/><path d="M1.3 11.6 L12.3 2.6 L23.4 11.6" fill="none" stroke="#b7b7b7" stroke-width="2.2" stroke-linejoin="miter"/></svg>
<span class="t" style="left:585.98px;top:707.00px;font-size:20.4px;letter-spacing:0.105px;">0:00 hrs (0:00)</span>
<svg class="abs" style="left:756.50px;top:739.70px" width="52" height="28" viewBox="140 190 1168.7 629.3"><path fill="#0468aa" fill-rule="evenodd" d="M385 205 H975 Q1000 207 985 232 L965 245 Q1000 262 1022 310 L1080 425 Q1100 440 1150 446 L1250 462 Q1300 470 1300 510 V660 Q1300 690 1270 690 H1200 Q1172 690 1165 660 A130 130 0 0 0 915 660 Q905 668 890 668 H550 Q535 668 527 660 A130 130 0 0 0 275 660 Q262 690 235 690 H190 Q160 690 160 660 V470 Q160 430 200 430 H290 L355 260 Q362 245 395 245 L375 232 Q360 207 385 205 Z M435 295 H665 V425 H370 Z M720 295 H935 L1000 425 H720 Z"/><circle cx="400" cy="695" r="97" fill="#0468aa"/><circle cx="1040" cy="695" r="97" fill="#0468aa"/></svg>
<div style="left:814.00px;top:676.00px;width:225.00px;height:30.00px;background:#fffea0;"></div>
<div style="left:814.00px;top:706.00px;width:225.00px;height:30.00px;background:#eae9e1;"></div>
<svg class="abs" style="left:1014.40px;top:677.80px" width="25" height="22" viewBox="0 0 25 22"><path d="M17.6 0.9 h2.5 v4.6 l-2.5 -2.2 z" fill="#b0b0b0"/><path d="M12.3 5.6 L19.9 11.8 V21 H14.2 V15.0 H10.5 V21 H4.9 V11.8 Z" fill="url(#hg)"/><path d="M1.3 11.6 L12.3 2.6 L23.4 11.6" fill="none" stroke="#b7b7b7" stroke-width="2.2" stroke-linejoin="miter"/></svg>
<span class="t" style="left:815.98px;top:707.00px;font-size:20.4px;letter-spacing:0.105px;">0:00 hrs (0:00)</span>
<svg class="abs" style="left:987.50px;top:739.70px" width="52" height="28" viewBox="140 190 1168.7 629.3"><path fill="#0468aa" fill-rule="evenodd" d="M385 205 H975 Q1000 207 985 232 L965 245 Q1000 262 1022 310 L1080 425 Q1100 440 1150 446 L1250 462 Q1300 470 1300 510 V660 Q1300 690 1270 690 H1200 Q1172 690 1165 660 A130 130 0 0 0 915 660 Q905 668 890 668 H550 Q535 668 527 660 A130 130 0 0 0 275 660 Q262 690 235 690 H190 Q160 690 160 660 V470 Q160 430 200 430 H290 L355 260 Q362 245 395 245 L375 232 Q360 207 385 205 Z M435 295 H665 V425 H370 Z M720 295 H935 L1000 425 H720 Z"/><circle cx="400" cy="695" r="97" fill="#0468aa"/><circle cx="1040" cy="695" r="97" fill="#0468aa"/></svg>
<div style="left:1045.00px;top:676.00px;width:224.00px;height:30.00px;background:#fffea0;"></div>
<div style="left:1045.00px;top:706.00px;width:224.00px;height:30.00px;background:#eae9e1;"></div>
<svg class="abs" style="left:1244.40px;top:677.80px" width="25" height="22" viewBox="0 0 25 22"><path d="M17.6 0.9 h2.5 v4.6 l-2.5 -2.2 z" fill="#b0b0b0"/><path d="M12.3 5.6 L19.9 11.8 V21 H14.2 V15.0 H10.5 V21 H4.9 V11.8 Z" fill="url(#hg)"/><path d="M1.3 11.6 L12.3 2.6 L23.4 11.6" fill="none" stroke="#b7b7b7" stroke-width="2.2" stroke-linejoin="miter"/></svg>
<span class="t" style="left:1046.98px;top:707.00px;font-size:20.4px;letter-spacing:0.105px;">0:00 hrs (0:00)</span>
<svg class="abs" style="left:1217.50px;top:739.70px" width="52" height="28" viewBox="140 190 1168.7 629.3"><path fill="#0468aa" fill-rule="evenodd" d="M385 205 H975 Q1000 207 985 232 L965 245 Q1000 262 1022 310 L1080 425 Q1100 440 1150 446 L1250 462 Q1300 470 1300 510 V660 Q1300 690 1270 690 H1200 Q1172 690 1165 660 A130 130 0 0 0 915 660 Q905 668 890 668 H550 Q535 668 527 660 A130 130 0 0 0 275 660 Q262 690 235 690 H190 Q160 690 160 660 V470 Q160 430 200 430 H290 L355 260 Q362 245 395 245 L375 232 Q360 207 385 205 Z M435 295 H665 V425 H370 Z M720 295 H935 L1000 425 H720 Z"/><circle cx="400" cy="695" r="97" fill="#0468aa"/><circle cx="1040" cy="695" r="97" fill="#0468aa"/></svg>
<div style="left:1275.00px;top:676.00px;width:224.00px;height:30.00px;background:#fffea0;"></div>
<div style="left:1275.00px;top:706.00px;width:224.00px;height:30.00px;background:#eae9e1;"></div>
<svg class="abs" style="left:1474.40px;top:677.80px" width="25" height="22" viewBox="0 0 25 22"><path d="M17.6 0.9 h2.5 v4.6 l-2.5 -2.2 z" fill="#b0b0b0"/><path d="M12.3 5.6 L19.9 11.8 V21 H14.2 V15.0 H10.5 V21 H4.9 V11.8 Z" fill="url(#hg)"/><path d="M1.3 11.6 L12.3 2.6 L23.4 11.6" fill="none" stroke="#b7b7b7" stroke-width="2.2" stroke-linejoin="miter"/></svg>
<span class="t" style="left:1276.98px;top:707.00px;font-size:20.4px;letter-spacing:0.105px;">0:00 hrs (0:00)</span>
<svg class="abs" style="left:1447.50px;top:739.70px" width="52" height="28" viewBox="140 190 1168.7 629.3"><path fill="#0468aa" fill-rule="evenodd" d="M385 205 H975 Q1000 207 985 232 L965 245 Q1000 262 1022 310 L1080 425 Q1100 440 1150 446 L1250 462 Q1300 470 1300 510 V660 Q1300 690 1270 690 H1200 Q1172 690 1165 660 A130 130 0 0 0 915 660 Q905 668 890 668 H550 Q535 668 527 660 A130 130 0 0 0 275 660 Q262 690 235 690 H190 Q160 690 160 660 V470 Q160 430 200 430 H290 L355 260 Q362 245 395 245 L375 232 Q360 207 385 205 Z M435 295 H665 V425 H370 Z M720 295 H935 L1000 425 H720 Z"/><circle cx="400" cy="695" r="97" fill="#0468aa"/><circle cx="1040" cy="695" r="97" fill="#0468aa"/></svg>
<div style="left:1505.00px;top:676.00px;width:224.00px;height:30.00px;background:#fffea0;"></div>
<div style="left:1505.00px;top:706.00px;width:224.00px;height:30.00px;background:#eae9e1;"></div>
<svg class="abs" style="left:1704.40px;top:677.80px" width="25" height="22" viewBox="0 0 25 22"><path d="M17.6 0.9 h2.5 v4.6 l-2.5 -2.2 z" fill="#b0b0b0"/><path d="M12.3 5.6 L19.9 11.8 V21 H14.2 V15.0 H10.5 V21 H4.9 V11.8 Z" fill="url(#hg)"/><path d="M1.3 11.6 L12.3 2.6 L23.4 11.6" fill="none" stroke="#b7b7b7" stroke-width="2.2" stroke-linejoin="miter"/></svg>
<span class="t" style="left:1506.98px;top:707.00px;font-size:20.4px;letter-spacing:0.105px;">0:00 hrs (0:00)</span>
<svg class="abs" style="left:1677.50px;top:739.70px" width="52" height="28" viewBox="140 190 1168.7 629.3"><path fill="#0468aa" fill-rule="evenodd" d="M385 205 H975 Q1000 207 985 232 L965 245 Q1000 262 1022 310 L1080 425 Q1100 440 1150 446 L1250 462 Q1300 470 1300 510 V660 Q1300 690 1270 690 H1200 Q1172 690 1165 660 A130 130 0 0 0 915 660 Q905 668 890 668 H550 Q535 668 527 660 A130 130 0 0 0 275 660 Q262 690 235 690 H190 Q160 690 160 660 V470 Q160 430 200 430 H290 L355 260 Q362 245 395 245 L375 232 Q360 207 385 205 Z M435 295 H665 V425 H370 Z M720 295 H935 L1000 425 H720 Z"/><circle cx="400" cy="695" r="97" fill="#0468aa"/><circle cx="1040" cy="695" r="97" fill="#0468aa"/></svg>
<div style="left:1735.00px;top:676.00px;width:224.00px;height:30.00px;background:#fffea0;"></div>
<div style="left:1735.00px;top:706.00px;width:224.00px;height:30.00px;background:#eae9e1;"></div>
<svg class="abs" style="left:1934.40px;top:677.80px" width="25" height="22" viewBox="0 0 25 22"><path d="M17.6 0.9 h2.5 v4.6 l-2.5 -2.2 z" fill="#b0b0b0"/><path d="M12.3 5.6 L19.9 11.8 V21 H14.2 V15.0 H10.5 V21 H4.9 V11.8 Z" fill="url(#hg)"/><path d="M1.3 11.6 L12.3 2.6 L23.4 11.6" fill="none" stroke="#b7b7b7" stroke-width="2.2" stroke-linejoin="miter"/></svg>
<span class="t" style="left:1736.98px;top:707.00px;font-size:20.4px;letter-spacing:0.105px;">0:00 hrs (0:00)</span>
<svg class="abs" style="left:1907.50px;top:739.70px" width="52" height="28" viewBox="140 190 1168.7 629.3"><path fill="#0468aa" fill-rule="evenodd" d="M385 205 H975 Q1000 207 985 232 L965 245 Q1000 262 1022 310 L1080 425 Q1100 440 1150 446 L1250 462 Q1300 470 1300 510 V660 Q1300 690 1270 690 H1200 Q1172 690 1165 660 A130 130 0 0 0 915 660 Q905 668 890 668 H550 Q535 668 527 660 A130 130 0 0 0 275 660 Q262 690 235 690 H190 Q160 690 160 660 V470 Q160 430 200 430 H290 L355 260 Q362 245 395 245 L375 232 Q360 207 385 205 Z M435 295 H665 V425 H370 Z M720 295 H935 L1000 425 H720 Z"/><circle cx="400" cy="695" r="97" fill="#0468aa"/><circle cx="1040" cy="695" r="97" fill="#0468aa"/></svg>
<span class="t" style="left:438.21px;top:785.00px;font-size:18.84px;letter-spacing:-0.332px;color:#0000ff;">ALMACSON</span>
<span class="t" style="left:439.24px;top:808.00px;font-size:18.84px;letter-spacing:0.569px;color:#0000ff;">Jimmy</span>
<div style="left:439.00px;top:835.20px;width:24.00px;height:24.80px;background:#6cff00;border:1px solid #808080;"></div>
<span class="t" style="left:443.43px;top:841.00px;font-size:13.73px;">D</span>
<svg class="abs" style="left:439.00px;top:887.00px" width="32" height="32" viewBox="0 0 32 32"><path d="M13.2 4.2 H3.2 Q2.3 4.2 2.3 5.2 V28 Q2.3 29 3.3 29 H18.9 Q19.9 29 19.9 28 V14.0" fill="none" stroke="#0f5c3d" stroke-width="2"/><rect x="1.3" y="24.1" width="19.6" height="5.9" rx="0.9" fill="#0f5c3d"/><path d="M10.1 26.9 h2.8 M11.5 25.5 v2.8" stroke="#d8efe4" stroke-width="0.9"/><path d="M15.5 0.3 H29.2 Q29.9 0.3 29.9 1 V9.5 Q29.9 10.2 29.2 10.2 H21.4 L17.7 13.0 L18.7 10.2 H15.5 Q14.8 10.2 14.8 9.5 V1 Q14.8 0.3 15.5 0.3 Z" fill="#0f5c3d"/><path d="M18.0 5.4 h2.3 M21.2 5.4 h2.3 M24.4 5.4 h2.3" stroke="#e6f5ee" stroke-width="1.6"/></svg>
<span class="t a" style="left:471.40px;top:890.00px;font-size:20.0px;letter-spacing:0.050px;color:#5aaae8;">sms</span>
<div style="left:584.00px;top:782.00px;width:224.00px;height:30.00px;background:#eae9e1;"></div>
<div style="left:584.00px;top:812.00px;width:224.00px;height:30.00px;background:#fffea0;"></div>
<span class="t" style="left:586.25px;top:788.00px;font-size:12.56px;letter-spacing:0.418px;">0:00 - 24:00</span>
<svg class="abs" style="left:783.40px;top:813.80px" width="25" height="22" viewBox="0 0 25 22"><path d="M17.6 0.9 h2.5 v4.6 l-2.5 -2.2 z" fill="#b0b0b0"/><path d="M12.3 5.6 L19.9 11.8 V21 H14.2 V15.0 H10.5 V21 H4.9 V11.8 Z" fill="url(#hg)"/><path d="M1.3 11.6 L12.3 2.6 L23.4 11.6" fill="none" stroke="#b7b7b7" stroke-width="2.2" stroke-linejoin="miter"/></svg>
<div style="left:814.00px;top:782.00px;width:225.00px;height:30.00px;background:#eae9e1;"></div>
<div style="left:814.00px;top:812.00px;width:225.00px;height:30.00px;background:#fffea0;"></div>
<span class="t" style="left:816.25px;top:788.00px;font-size:12.56px;letter-spacing:0.418px;">0:00 - 24:00</span>
<svg class="abs" style="left:1014.40px;top:813.80px" width="25" height="22" viewBox="0 0 25 22"><path d="M17.6 0.9 h2.5 v4.6 l-2.5 -2.2 z" fill="#b0b0b0"/><path d="M12.3 5.6 L19.9 11.8 V21 H14.2 V15.0 H10.5 V21 H4.9 V11.8 Z" fill="url(#hg)"/><path d="M1.3 11.6 L12.3 2.6 L23.4 11.6" fill="none" stroke="#b7b7b7" stroke-width="2.2" stroke-linejoin="miter"/></svg>
<div style="left:1045.00px;top:782.00px;width:224.00px;height:30.00px;background:#eae9e1;"></div>
<div style="left:1045.00px;top:812.00px;width:224.00px;height:30.00px;background:#fffea0;"></div>
<span class="t" style="left:1047.25px;top:788.00px;font-size:12.56px;letter-spacing:0.418px;">0:00 - 24:00</span>
<svg class="abs" style="left:1244.40px;top:813.80px" width="25" height="22" viewBox="0 0 25 22"><path d="M17.6 0.9 h2.5 v4.6 l-2.5 -2.2 z" fill="#b0b0b0"/><path d="M12.3 5.6 L19.9 11.8 V21 H14.2 V15.0 H10.5 V21 H4.9 V11.8 Z" fill="url(#hg)"/><path d="M1.3 11.6 L12.3 2.6 L23.4 11.6" fill="none" stroke="#b7b7b7" stroke-width="2.2" stroke-linejoin="miter"/></svg>
<div style="left:1275.00px;top:782.00px;width:224.00px;height:30.00px;background:#eae9e1;"></div>
<div style="left:1275.00px;top:812.00px;width:224.00px;height:30.00px;background:#fffea0;"></div>
<span class="t" style="left:1277.25px;top:788.00px;font-size:12.56px;letter-spacing:0.418px;">0:00 - 24:00</span>
<svg class="abs" style="left:1474.40px;top:813.80px" width="25" height="22" viewBox="0 0 25 22"><path d="M17.6 0.9 h2.5 v4.6 l-2.5 -2.2 z" fill="#b0b0b0"/><path d="M12.3 5.6 L19.9 11.8 V21 H14.2 V15.0 H10.5 V21 H4.9 V11.8 Z" fill="url(#hg)"/><path d="M1.3 11.6 L12.3 2.6 L23.4 11.6" fill="none" stroke="#b7b7b7" stroke-width="2.2" stroke-linejoin="miter"/></svg>
<div style="left:1505.00px;top:782.00px;width:224.00px;height:30.00px;background:#eae9e1;"></div>
<div style="left:1505.00px;top:812.00px;width:224.00px;height:30.00px;background:#fffea0;"></div>
<span class="t" style="left:1507.25px;top:788.00px;font-size:12.56px;letter-spacing:0.418px;">0:00 - 24:00</span>
<svg class="abs" style="left:1704.40px;top:813.80px" width="25" height="22" viewBox="0 0 25 22"><path d="M17.6 0.9 h2.5 v4.6 l-2.5 -2.2 z" fill="#b0b0b0"/><path d="M12.3 5.6 L19.9 11.8 V21 H14.2 V15.0 H10.5 V21 H4.9 V11.8 Z" fill="url(#hg)"/><path d="M1.3 11.6 L12.3 2.6 L23.4 11.6" fill="none" stroke="#b7b7b7" stroke-width="2.2" stroke-linejoin="miter"/></svg>
<div style="left:1735.00px;top:782.00px;width:224.00px;height:30.00px;background:#eae9e1;"></div>
<div style="left:1735.00px;top:812.00px;width:224.00px;height:30.00px;background:#fffea0;"></div>
<span class="t" style="left:1737.25px;top:788.00px;font-size:12.56px;letter-spacing:0.418px;">0:00 - 24:00</span>
<svg class="abs" style="left:1934.40px;top:813.80px" width="25" height="22" viewBox="0 0 25 22"><path d="M17.6 0.9 h2.5 v4.6 l-2.5 -2.2 z" fill="#b0b0b0"/><path d="M12.3 5.6 L19.9 11.8 V21 H14.2 V15.0 H10.5 V21 H4.9 V11.8 Z" fill="url(#hg)"/><path d="M1.3 11.6 L12.3 2.6 L23.4 11.6" fill="none" stroke="#b7b7b7" stroke-width="2.2" stroke-linejoin="miter"/></svg>
</div>
<div class="grp" id="annotations">
<svg class="abs" style="left:0;top:0" width="1798" height="910" viewBox="0 0 1798 910"><rect x="7.45" y="253.55" width="364.15" height="652.0" rx="33" ry="33" fill="none" stroke="#ed1c24" stroke-width="7.1"/><path d="M1659.2 68.0 L1612.6 60.7 L1619.0 72.6 L1575.5 91.3 L1584.9 110.7 L1628.2 93.1 L1633.3 105.1 Z" fill="#ed1c24" stroke="#000" stroke-width="3" stroke-linejoin="miter"/></svg>
</div>
</div></body></html>
